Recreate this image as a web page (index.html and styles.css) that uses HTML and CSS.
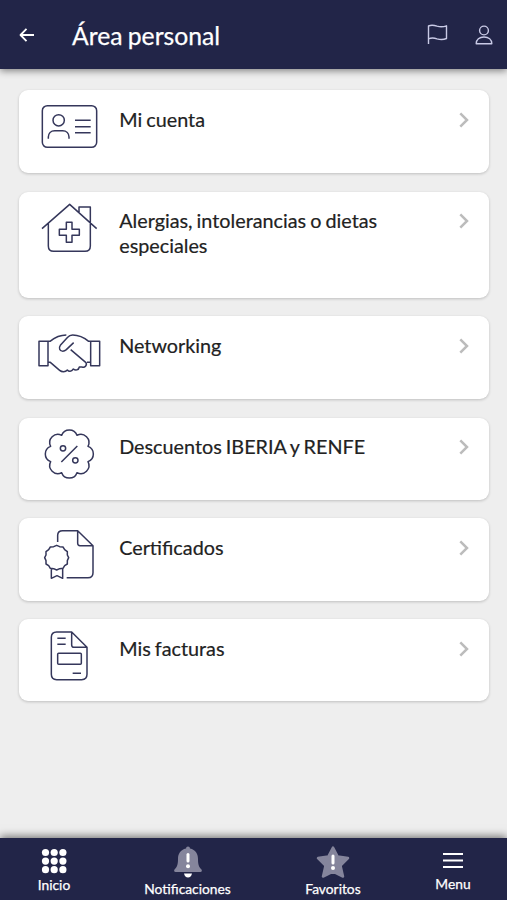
FILE: index.html
```html
<!DOCTYPE html>
<html lang="es">
<head>
<meta charset="utf-8">
<title>Área personal</title>
<link rel="stylesheet" href="styles.css">
</head>
<body>
<header class="topbar">
  <svg class="back" viewBox="0 0 16 16"><path d="M15 8H1.500M7.500 1.800 1.500 8l6 6.200"/></svg>
  <h1>Área personal</h1>
  <svg class="flag" viewBox="0 0 22 22"><path d="M1.500 20V2c3-1.300 5.500-.8 8.500.2 3.500 1 6.500.8 9.500-.4v12.700c-3 1.200-6 1.300-9.500.3-3-1-5.500-1.200-8.500 0"/></svg>
  <svg class="user" viewBox="0 0 18 20"><circle cx="9" cy="5.500" r="4.400"/><path d="M1.200 18.700c0-4.200 3.200-6.700 7.800-6.700s7.800 2.500 7.800 6.700z"/></svg>
</header>
<main class="list">
  <a class="card">
    <svg class="icon" viewBox="75 15 210 180"><rect x="97" y="62" width="163" height="125" rx="15"/><circle cx="146" cy="106" r="17"/><path d="M115 161v-5c0-11 8-19 19-19h24c11 0 19 8 19 19v5M195 106h47M195 125h47M195 143h47"/></svg>
    <span class="label">Mi cuenta</span>
    <svg class="chevron" viewBox="0 0 10 16"><path d="M1.300 1.300 8 8l-6.700 6.700"/></svg>
  </a>
  <a class="card tall">
    <svg class="icon" viewBox="75 21 210 180"><path d="M96 131 179 58l81 73M115 116v67q0 16 16 16h94q16 0 16-16V66h-34v15M169 112h17v21h22v18h-22v21h-17v-21h-21v-18h21z"/></svg>
    <span class="label">Alergias, intolerancias o dietas especiales</span>
    <svg class="chevron" viewBox="0 0 10 16"><path d="M1.300 1.300 8 8l-6.700 6.700"/></svg>
  </a>
  <a class="card">
    <svg class="icon" viewBox="75 18 210 180"><path d="M87 94h27v73H87zM242 94h27v73h-27zM114 94h6c15-12 30-19 49-19M191 98l-22 21c-8 7-18 5-20-1-2-5-1-8 2-12l22-24c4-5 8-7 15-7 20 0 35 8 48 19h6M182 119l45 38c6 7-2 17-11 14h-8c-2 10-12 11-18 6-6 9-14 8-18 3-6 7-17 6-23 1l-28-24h-7M242 157h-11"/></svg>
    <span class="label">Networking</span>
    <svg class="chevron" viewBox="0 0 10 16"><path d="M1.300 1.300 8 8l-6.700 6.700"/></svg>
  </a>
  <a class="card short">
    <svg class="icon" viewBox="75 24 210 180"><path d="M155 76a24.500 24.500 0 0 1 46 0a24.500 24.500 0 0 1 33 33a24.500 24.500 0 0 1 0 46a24.500 24.500 0 0 1-33 33a24.500 24.500 0 0 1-46 0a24.500 24.500 0 0 1-33-33a24.500 24.500 0 0 1 0-46a24.500 24.500 0 0 1 33-33zM154 156l48-48"/><circle cx="159" cy="115" r="8"/><circle cx="196" cy="151" r="8"/></svg>
    <span class="label">Descuentos IBERIA y RENFE</span>
    <svg class="chevron" viewBox="0 0 10 16"><path d="M1.300 1.300 8 8l-6.700 6.700"/></svg>
  </a>
  <a class="card">
    <svg class="icon" viewBox="75 24 210 180"><path d="M143 96V76q0-14 15-14h45l46 45v81q0 15-15 15h-64M203 62v38q0 7 7 7h39M140 106l9 4 10 1 5 8 8 6v10l4 8-4 9v10l-8 5-5 8-10 1-9 4-9-4-10-1-5-8-8-5v-10l-4-9 4-8v-10l8-6 5-8 10-1zM124 175v30l17-8 17 8v-30"/></svg>
    <span class="label">Certificados</span>
    <svg class="chevron" viewBox="0 0 10 16"><path d="M1.300 1.300 8 8l-6.700 6.700"/></svg>
  </a>
  <a class="card short">
    <svg class="icon" viewBox="75 27 210 180"><path d="M140 66h45l46 46v81q0 16-16 16h-75q-16 0-16-16V82q0-16 16-16zM185 66v39q0 7 7 7h39M142 85h25M142 103h25M188 190h25"/><rect x="143" y="130" width="71" height="33" rx="3"/></svg>
    <span class="label">Mis facturas</span>
    <svg class="chevron" viewBox="0 0 10 16"><path d="M1.300 1.300 8 8l-6.700 6.700"/></svg>
  </a>
</main>
<nav class="tabs">
  <a class="tab home">
    <svg width="26" height="26" viewBox="0 0 26 26" fill="#fff"><circle cx="4.500" cy="4.500" r="3.600"/><circle cx="13.200" cy="4.500" r="3.600"/><circle cx="21.900" cy="4.500" r="3.600"/><circle cx="4.500" cy="13.100" r="3.600"/><circle cx="13.200" cy="13.100" r="3.600"/><circle cx="21.900" cy="13.100" r="3.600"/><circle cx="4.500" cy="21.700" r="3.600"/><circle cx="13.200" cy="21.700" r="3.600"/><circle cx="21.900" cy="21.700" r="3.600"/></svg>
    <span>Inicio</span>
  </a>
  <a class="tab alerts">
    <svg width="30" height="34" viewBox="0 0 30 34"><path fill="#85859c" d="M13 3.500a2 2 0 0 1 4 0c5.500 1.200 8 5.200 8 10.500 0 5.500.8 7.800 3.500 10.500.8 1 .2 2.500-1 2.500h-25c-1.200 0-1.800-1.500-1-2.500C4.200 21.800 5 19.500 5 14c0-5.300 2.500-9.300 8-10.500z"/><path fill="#fff" d="M11 28.500h8c-.5 2.700-2 4-4 4s-3.500-1.300-4-4z"/><path class="mark" d="M15 9.500v6.500"/><circle cx="15" cy="21.200" r="2" fill="#fff"/></svg>
    <span>Notificaciones</span>
  </a>
  <a class="tab favorites">
    <svg width="34" height="34" viewBox="0 0 34 34"><path fill="#85859c" stroke="#85859c" stroke-width="2.500" stroke-linejoin="round" d="m17 2.500 4.700 9 10.300 1.600-7.500 7.400 2.500 11-10-4.800-10 4.800 2.500-11L2 13.100l10.300-1.600z"/><path class="mark" d="M17 11v7"/><circle cx="17" cy="23" r="2" fill="#fff"/></svg>
    <span>Favoritos</span>
  </a>
  <a class="tab menu">
    <svg width="22" height="18" viewBox="0 0 22 18"><path fill="none" stroke="#fff" stroke-width="2" d="M1 2h20M1 8.500h20M1 15h20"/></svg>
    <span>Menu</span>
  </a>
</nav>
</body>
</html>
```
FILE: styles.css
```css
* {
  box-sizing: border-box;
}

body {
  margin: 0;
  height: 900px;
  display: flex;
  flex-direction: column;
  overflow: hidden;
  background: #eee;
  color: #222;
  font-family: Lato, "Liberation Sans", sans-serif;
}

.topbar,
.tabs {
  position: relative;
  z-index: 1;
  flex: none;
  background: #222548;
  color: #fff;
}

.topbar {
  height: 69px;
  display: flex;
  align-items: center;
  padding: 0 14px 0 19px;
  box-shadow: 0 2px 7px rgba(0, 0, 0, .45);
}

.topbar svg {
  flex: none;
  fill: none;
  stroke: #c9cae6;
  stroke-width: 1.4;
  stroke-linejoin: round;
}

.topbar .back {
  width: 16px;
  height: 16px;
  stroke: #fff;
  stroke-width: 1.8;
}

h1 {
  flex: 1;
  margin: 2px 0 0 37px;
  font-size: 24.700px;
  line-height: 30px;
  font-weight: 400;
  word-spacing: -1px;
  -webkit-text-stroke: .25px;
}

.topbar .flag {
  width: 22px;
  height: 22px;
}

.topbar .user {
  width: 18px;
  height: 20px;
  margin-left: 26px;
}

.list {
  flex: 1;
  display: flex;
  flex-direction: column;
  gap: 18.500px;
  padding: 21px 18px 0 19px;
}

.card {
  flex: none;
  height: 83px;
  display: flex;
  align-items: flex-start;
  padding: 0 20px 0 16px;
  border-radius: 9px;
  background: #fff;
  box-shadow: 0 1px 3px rgba(0, 0, 0, .2);
}

.card:nth-child(5) {
  height: 82.700px;
}

.tall {
  height: 106px;
}

.short {
  height: 82px;
}

.icon {
  flex: none;
  width: 70px;
  height: 60px;
  fill: none;
  stroke: #35375b;
  stroke-width: 4.500;
  stroke-linejoin: round;
  overflow: visible;
}

.label {
  flex: 1;
  margin: 16.500px 40px 0 14.200px;
  font-size: 19.800px;
  line-height: 24.500px;
  word-spacing: -1px;
  -webkit-text-stroke: .2px;
}

.chevron {
  flex: none;
  width: 10px;
  height: 16px;
  margin-top: 21.800px;
  fill: none;
  stroke: #bcbcbc;
  stroke-width: 2.500;
}

.tabs {
  height: 62px;
  display: grid;
  grid-template-columns: 108px 159px 132px 108px;
  box-shadow: 0 -2px 8px rgba(0, 0, 0, .5);
}

.tab {
  display: flex;
  flex-direction: column;
  align-items: center;
  font-size: 13.800px;
  line-height: 16px;
  -webkit-text-stroke: .25px;
}

.home {
  padding-top: 10px;
}

.home span {
  margin-top: 3px;
}

.alerts,
.favorites {
  padding-top: 7px;
}

.alerts span,
.favorites span {
  margin-top: 2px;
}

.menu {
  padding-top: 14px;
}

.menu span {
  margin-top: 6px;
}

.mark {
  fill: none;
  stroke: #fff;
  stroke-width: 3;
  stroke-linecap: round;
}
```
